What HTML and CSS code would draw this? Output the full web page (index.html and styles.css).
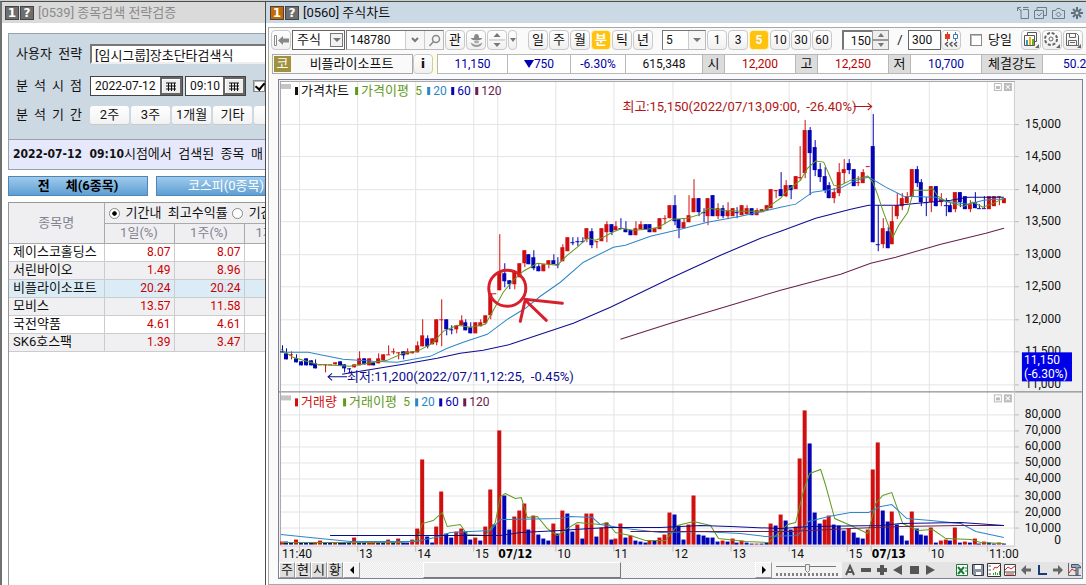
FILE: index.html
```html
<!DOCTYPE html>
<html lang="ko">
<head>
<meta charset="utf-8">
<title>[0560] 주식차트</title>
<link rel="stylesheet" href="styles.css">
</head>
<body>
<div class="desktop">
  <section class="window search">
    <header class="titlebar titlebar-off"><b class="tag">1</b><b class="tag">?</b><span>[0539] 종목검색 전략검증</span></header>
    <div class="search-body">
      <form class="panel">
        <div class="field"><label class="field-name" for="strategy">사용자&nbsp; 전략</label><input id="strategy" class="sunk strategy" value="[임시그룹]장초단타검색식"></div>
        <div class="field">
          <label class="field-name spaced" for="day"><span>분</span><span>석</span><span>시</span><span>점</span></label>
          <span class="picker"><input id="day" class="day" value="2022-07-12"><button type="button" aria-label="달력"><svg width="10" height="9" viewBox="0 0 10 9"><path d="M0 1H10M0 4H10M0 7H10M2.5 1V9M5.5 1V9M8.5 1V9" stroke="#111"/></svg></button></span>
          <span class="picker"><input class="time" aria-label="시간" value="09:10"><button type="button" aria-label="시각"><svg width="10" height="9" viewBox="0 0 10 9"><path d="M0 1H10M0 4H10M0 7H10M2.5 1V9M5.5 1V9M8.5 1V9" stroke="#111"/></svg></button></span>
          <input type="checkbox" class="check" aria-label="적용" checked>
        </div>
        <div class="field periods">
          <span class="field-name spaced"><span>분</span><span>석</span><span>기</span><span>간</span></span>
          <button type="button">2주</button><button type="button">3주</button><button type="button">1개월</button><button type="button">기타</button><button type="button" aria-label="더보기"></button>
        </div>
        <p class="summary"><b>2022-07-12&nbsp; 09:10</b>시점에서&nbsp; 검색된&nbsp; 종목&nbsp; 매</p>
      </form>
      <div class="tabs"><button class="tab on">전&nbsp;&nbsp;&nbsp;&nbsp; 체(6종목)</button><button class="tab">코스피(0종목)</button></div>
      <div class="grid">
        <table>
          <colgroup><col class="c-name"><col class="c-num"><col class="c-num"><col class="c-num"></colgroup>
          <thead>
            <tr><th rowspan="2">종목명</th><th colspan="3" class="modes"><label><input type="radio" name="mode" checked>기간내&nbsp; 최고수익률</label><label><input type="radio" name="mode">기간내</label></th></tr>
            <tr><th>1일(%)</th><th>1주(%)</th><th class="cut">1개월</th></tr>
          </thead>
          <tbody>
            <tr><td>제이스코홀딩스</td><td>8.07</td><td>8.07</td><td></td></tr>
            <tr class="alt"><td>서린바이오</td><td>1.49</td><td>8.96</td><td></td></tr>
            <tr class="sel"><td>비플라이소프트</td><td>20.24</td><td>20.24</td><td></td></tr>
            <tr class="alt"><td>모비스</td><td>13.57</td><td>11.58</td><td></td></tr>
            <tr><td>국전약품</td><td>4.61</td><td>4.61</td><td></td></tr>
            <tr class="alt"><td>SK6호스팩</td><td>1.39</td><td>3.47</td><td></td></tr>
          </tbody>
        </table>
      </div>
    </div>
  </section>

  <section class="window chart">
    <header class="titlebar"><b class="tag hot">1</b><b class="tag">?</b><span>[0560] 주식차트</span>
      <svg class="win-icons" width="68" height="14" viewBox="0 0 68 14" fill="none" stroke="#6d7c88"><path d="M1.500 5V1.500H5M2 2L5 5M5 3.500V12.500H12.500V3.500H7M7 1.500H12.500"/><path d="M18.500 4.500H27.500V12.500H18.500ZM21 4V1.500H30.500V9.500H28M21 8L23 10L26 6.500"/><path d="M36.500 4.500H39.500L41 2.500H44L46 4.500H48.500V12.500H36.500ZM42.500 6L45 8.500L42.500 11L40 8.500Z"/><g stroke="#5f6e7a" stroke-width="2"><path d="M61 1V13M55 7H67M57 3L65 11M65 3L57 11"/></g><circle cx="61" cy="7" r="1.500" fill="#cbd9e4" stroke="none"/></svg>
    </header>
    <div class="client">
      <div class="tools">
        <button class="tb" aria-label="이전"><svg width="15" height="11" viewBox="0 0 15 11"><path d="M.5 .5H2.500V10.500H.5Z" fill="#fff" stroke="#888"/><path d="M4 5.500L9 1V3.500H15V7.500H9V10Z" fill="#888"/></svg></button>
        <span class="kind"><select aria-label="종류"><option>주식</option></select><i></i></span>
        <span class="combo"><input class="code" aria-label="종목코드" value="148780"><button aria-label="목록"><svg width="8" height="6" viewBox="0 0 8 6"><path d="M1 1L4 4L7 1" fill="none" stroke="#777" stroke-width="2"/></svg></button><button aria-label="검색"><svg width="13" height="13" viewBox="0 0 13 13" fill="none" stroke="#888" stroke-width="1.500"><circle cx="8" cy="5" r="3.500"/><path d="M5.500 7.500L1.500 12"/></svg></button></span>
        <button class="tb">관</button>
        <button class="tb" aria-label="뉴스"><svg width="15" height="15" viewBox="0 0 15 15"><path d="M7.500 1Q10 1 10 5H13.500Q12 7.500 7.500 7.500T1.500 5H5Q5 1 7.500 1" fill="#888"/><path d="M5 8H10Q10 10.500 7.500 10.500T5 8" fill="#aaa"/><path d="M1.500 9.500Q3 14 7.500 14T13.500 9.500L10.500 11Q7.500 13 4.500 11Z" fill="#999"/></svg></button>
        <button class="tb" aria-label="위아래"><svg width="16" height="14" viewBox="0 0 16 14"><path d="M4.500 4L8 0L11.500 4ZM4.500 10L8 14L11.500 10Z" fill="#777"/><path d="M0 7H16" stroke="#bbb"/></svg></button><button class="tb slim" aria-label="더보기"><i class="down"></i></button>
        <div class="btns first"><button class="tb">일</button><button class="tb">주</button><button class="tb">월</button><button class="tb on">분</button><button class="tb">틱</button><button class="tb">년</button></div>
        <span class="combo minute"><input aria-label="분 단위" value="5"><button aria-label="목록"><i class="down"></i></button></span>
        <div class="btns nums"><button class="tb">1</button><button class="tb">3</button><button class="tb on">5</button><button class="tb">10</button><button class="tb">30</button><button class="tb">60</button></div>
        <span class="spin"><input aria-label="봉 수" value="150"><span><button aria-label="증가"><i class="up"></i></button><button aria-label="감소"><i class="down"></i></button></span></span>
        <span class="slash">/</span>
        <input class="total" aria-label="전체" value="300"><button class="tb more" aria-label="추가"><svg width="15" height="16" viewBox="0 0 15 16"><path d="M3.500 0V9" stroke="#e03c20"/><path d="M1 2H6V7H1Z" fill="#e03c20"/><path d="M11.500 0V9" stroke="#3c78b4"/><path d="M9.500 2.500H13.500V6.500H9.500Z" fill="#fff" stroke="#3c78b4"/><path d="M4 10L1.500 12L4 14.500M8.500 10L6 12L8.500 14.500M13 10L10.500 12L13 14.500" stroke="#555" fill="none" stroke-width="1.500"/></svg></button>
        <label class="today"><input type="checkbox" class="check">당일</label>
        <div class="btns">
          <button class="tb" aria-label="차트유형"><svg width="18" height="18" viewBox="0 0 18 18"><path d="M5.500 1.500H14.500V10.500H5.500Z" fill="#fff" stroke="#555"/><path d="M2.500 4.500H12.500V14.500H2.500Z" fill="#fff" stroke="#555"/><path d="M4 9H6V14H4Z" fill="#28a0c8"/><path d="M7 6H9V14H7Z" fill="#f0b400"/><path d="M10 8H12V14H10Z" fill="#6aaa30"/><path d="M17 13V17H13Z" fill="#666"/></svg></button>
          <button class="tb" aria-label="설정"><svg width="18" height="18" viewBox="0 0 18 18" fill="none" stroke="#666"><circle cx="8" cy="8" r="6" stroke-width="2" stroke-dasharray="3 1.700"/><circle cx="8" cy="8" r="2"/><path d="M17 13V17H13Z" fill="#666" stroke="none"/></svg></button>
          <button class="tb" aria-label="저장"><svg width="18" height="18" viewBox="0 0 18 18" fill="none" stroke="#666"><path d="M2.500 2.500H12.500L14.500 4.500V14.500H2.500ZM5.500 2.500V6.500H11.500V2.500M4.500 14V9.500H12.500V14M6 11.500H11"/><path d="M17 13V17H13Z" fill="#666" stroke="none"/></svg></button>
        </div>
      </div>
      <div class="quote">
        <div class="stock"><b>코</b><span>비플라이소프트</span></div><button class="tb info">i</button>
        <div class="values">
          <span class="v w71 blue">11,150</span><span class="v w63 blue"><i class="tri"></i>750</span><span class="v w55 blue">-6.30%</span><span class="v w77">615,348</span>
          <span class="v k">시</span><span class="v w71 red">12,200</span><span class="v k">고</span><span class="v w71 red">12,250</span><span class="v k">저</span><span class="v w71 blue">10,700</span><span class="v k wide">체결강도</span><span class="v w71 blue">50.24</span>
        </div>
      </div>
      <div class="frame">
        <svg id="plot" class="plot" viewBox="279 80 802 481" role="img" aria-label="비플라이소프트 5분 차트"></svg>
        <div class="bottom">
          <button class="key">주</button><button class="key">현</button><button class="key">시</button><button class="key">황</button><button class="key arrow" aria-label="왼쪽"><i class="left"></i></button>
          <div class="track"><div class="thumb"></div></div>
          <button class="key arrow" aria-label="오른쪽"><i class="right"></i></button>
          <div class="zoomer"><svg width="62" height="16" viewBox="0 0 62 16"><path d="M0 4.500H60" stroke="#777"/><path d="M.5 12.500H62" stroke="#111" stroke-width="3" stroke-dasharray="1 3"/><path d="M29.500 2.500H33.500V8.500L31.500 10.500L29.500 8.500Z" fill="#eee" stroke="#888"/></svg></div>
          <div class="marks">
            <button aria-label="글자"><svg width="14" height="14" viewBox="0 0 14 14"><path d="M3 12L7 3L11 12M4.500 9H9.500" stroke="#555" stroke-width="2" fill="none"/></svg></button>
            <button aria-label="축소"><svg width="14" height="14" viewBox="0 0 14 14"><path d="M2 5H12V9H2Z" fill="#555"/></svg></button>
            <button aria-label="확대"><svg width="14" height="14" viewBox="0 0 14 14"><path d="M5 2H9V5H12V9H9V12H5V9H2V5H5Z" fill="#555"/></svg></button>
            <button aria-label="뒤로"><svg width="14" height="14" viewBox="0 0 14 14"><path d="M11 2V12L2 7Z" fill="#555"/></svg></button>
            <button aria-label="정지"><svg width="14" height="14" viewBox="0 0 14 14"><path d="M3 3H12V11H3Z" fill="#555"/></svg></button>
            <button aria-label="재생"><svg width="14" height="14" viewBox="0 0 14 14"><path d="M3 2V12L12 7Z" fill="#555"/></svg></button>
          </div>
          <div class="files">
            <button aria-label="엑셀"><svg width="14" height="14" viewBox="0 0 14 14"><path d="M1.500 1.500H12.500V12.500H1.500Z" fill="#fff" stroke="#207838"/><path d="M3 4L9 11M9 4L3 11" stroke="#207838" stroke-width="2"/><path d="M10 5H12M10 8H12" stroke="#207838"/></svg></button>
            <button aria-label="파일 저장"><svg width="14" height="14" viewBox="0 0 14 14"><path d="M1.500 1.500H12.500V12.500H3L1.500 11Z" fill="#8894a0" stroke="#334"/><path d="M4 2H10V6H4ZM5 9H10V12H5Z" fill="#fff"/></svg></button>
            <button aria-label="지표"><svg width="16" height="16" viewBox="0 0 16 16"><path d="M1.500 1.500H14.500V14.500H1.500Z" fill="#fff" stroke="#333"/><path d="M2.500 4H5M2.500 8H5M2.500 12H5" stroke="#555"/><path d="M7 8L9 5L11 6L14 3" fill="none" stroke="#d22"/><path d="M7.500 13V11M9.500 13V10M11.500 13V11M13.500 13V9" stroke="#2a2"/></svg></button>
            <button aria-label="추세"><svg width="14" height="14" viewBox="0 0 14 14"><path d="M1.500 1.500H12.500V12.500H1.500ZM1.500 9H12.500" fill="#fff" stroke="#444"/><path d="M2 7L5 4L8 6L12 3M3 11H11" fill="none" stroke="#d22"/></svg></button>
            <button aria-label="왼쪽으로"><svg width="14" height="14" viewBox="0 0 14 14"><path d="M2 7L7 2V5.500H12V8.500H7V12Z" fill="#666"/></svg></button>
            <button aria-label="선"><svg width="14" height="14" viewBox="0 0 14 14"><path d="M4 2V11H12" fill="none" stroke="#1a3a78" stroke-width="2"/></svg></button>
            <button aria-label="오른쪽으로"><svg width="14" height="14" viewBox="0 0 14 14"><path d="M12 7L7 2V5.500H2V8.500H7V12Z" fill="#666"/></svg></button>
            <button aria-label="도구"><svg width="15" height="15" viewBox="0 0 15 15"><path d="M1.500 1V13.500H14" fill="none" stroke="#666"/><path d="M2 11L5 7L8 9L12 5" fill="none" stroke="#d22"/><path d="M4.500 2.500H11L13.500 4.500V6L11 5.500V13H9V5.500H4.500Z" fill="#9ab" stroke="#456"/></svg></button>
          </div>
        </div>
      </div>
    </div>
  </section>
</div>
<script src="chart.js"></script>
</body>
</html>
```
FILE: styles.css
```css
* { box-sizing: border-box; }
html, body { height: 100%; }
body { margin: 0; overflow: hidden; background: #c9cfcb; }
body, button, input, select { font: 13px/16px Roboto, "Noto Sans CJK KR", sans-serif; color: #111; }
button, input, select { padding: 0; margin: 0; border: 0; border-radius: 0; background: none; }
input { min-width: 0; outline: 0; }
button { display: flex; align-items: center; justify-content: center; white-space: nowrap; }
svg { display: block; }
i { display: inline-block; }

.desktop { display: flex; height: 100%; padding-top: 1px; }
.window { overflow: hidden; background: #fff; border-top: 1px solid #4c4c4c; }
.search { flex: 0 0 265px; border-left: 2px solid #6e716f; }
.chart { flex: 1; min-width: 0; border-left: 1px solid #4c4c4c; display: flex; flex-direction: column; }
.titlebar { display: flex; align-items: center; height: 21px; padding-left: 4px; background: #cbd9e4; white-space: nowrap; }
.titlebar-off { background: #dadada; color: #8a8a8a; padding-left: 3px; }
.titlebar span { margin-left: 3px; }
.tag { width: 14px; height: 14px; margin-right: 1px; background: #6e6e6e; border: 1px solid #444; color: #fff; font: bold 12px/12px "DejaVu Sans", sans-serif; text-align: center; }
.tag.hot { background: #c46a00; }
.win-icons { margin-left: auto; margin-right: 2px; }

.search-body { padding: 10px 0 0 6px; width: 340px; height: calc(100% - 21px); display: flex; flex-direction: column; }
.panel { background: #ccd8e2; border: 1px solid #98a2ac; padding-top: 10px; }
.field { display: flex; align-items: center; height: 20px; margin-bottom: 12px; padding-left: 7px; }
.field-name { width: 66px; margin-right: 8px; white-space: nowrap; }
.spaced { display: flex; justify-content: space-between; }
.sunk { background: #fff; border: 2px solid #777; border-right: 0; border-bottom-color: #eee; }
.strategy { width: 200px; height: 20px; padding-left: 3px; }
.picker { display: flex; height: 20px; background: #fff; border: 1px solid #444; margin-right: 2px; }
.picker input { font-size: 12px; padding-left: 4px; }
.day { width: 69px; }
.time { width: 37px; }
.picker button { width: 22px; background: #eee; border: 2px solid #666; box-shadow: inset 1px 1px #fff; }
.check { appearance: none; width: 12px; height: 12px; background: #fff; border: 1px solid #888; box-shadow: inset 1px 1px #bbb; }
.check:checked::before { content: ""; display: block; width: 4px; height: 7px; margin: 0 0 0 3px; border: solid #000; border-width: 0 2px 2px 0; rotate: 40deg; }
.picker + .check { margin-left: 5px; }
.periods { margin-bottom: 14px; margin-top: -3px; }
.periods button { width: 39px; height: 19px; margin-right: 2px; background: linear-gradient(#fff, #f2f2f2); border-radius: 3px; border-bottom: 1px solid #c8c8c8; }
.summary { margin: 0; padding: 5px 4px 0; height: 30px; background: #e6e8fb; border-top: 1px solid #98a2ac; white-space: nowrap; line-height: 18px; }
.summary b { font: bold 12px/18px "DejaVu Sans Condensed", "DejaVu Sans", sans-serif; }
.tabs { display: flex; gap: 8px; margin: 6px 0; }
.tab { width: 140px; height: 20px; background: linear-gradient(#9fcaec, #5e9fd4); border: 1px solid #4f86b8; color: #fff; }
.tab.on { color: #000; font-weight: bold; }
.grid { flex: 1; border: 1px solid #999; border-bottom: 0; background: #fff; }
table { border-collapse: collapse; table-layout: fixed; width: 305px; line-height: 16px; }
.c-name { width: 95px; }
.c-num { width: 70px; }
th { height: 20px; padding: 0; background: #efeff2; border: 1px solid #aaa; border-top: 0; border-left: 0; font-weight: normal; color: #83838f; }
th.modes { color: #111; text-align: left; white-space: nowrap; overflow: hidden; }
th.cut { text-align: left; padding-left: 11px; }
.modes label { display: inline-flex; align-items: center; vertical-align: middle; }
.modes input { appearance: none; width: 11px; height: 11px; margin: 0 6px 0 4px; border: 1px solid #888; border-radius: 50%; background: #fff; }
.modes input:checked { background: radial-gradient(#000 0 30%, #fff 40%); }
td { height: 18px; padding: 0 3px 0 4px; border: 1px solid #ccc; border-left: 0; text-align: right; color: #c00; white-space: nowrap; font-size: 12px; }
td:first-child { text-align: left; color: #111; padding-right: 0; font-size: 13px; }
.alt td { background: #f0f0f2; }
.sel td { background: #dcecf7; }

.client { flex: 1; display: flex; flex-direction: column; margin: 4px 0 0 2px; border: 1px solid #a8a8a8; border-right: 0; min-height: 0; background: #fafafa; }
.tools { display: flex; align-items: center; height: 26px; padding: 0 0 2px 2px; white-space: nowrap; overflow: hidden; flex: none; }
.tools > * { flex: none; margin-right: 1px; }
.tb { width: 20px; height: 20px; border: 1px solid #c9c9c9; border-radius: 4px; background: linear-gradient(#fff, #f0f0f0); }
.btns .tb { flex: none; margin-right: 1px; }
.nums .tb { font-size: 12px; }
.btns { display: flex; }
.btns.first { margin-left: 10px; margin-right: 8px; }
.tb.on { background: #ffc20e; border-color: #fff0b0; color: #fff; font-weight: bold; }
.kind { position: relative; }
.kind select { appearance: none; width: 53px; height: 20px; padding-left: 4px; border: 1px solid #666; background: #fff; }
.kind i { position: absolute; right: 2px; top: 3px; width: 13px; height: 14px; border: 1px solid #777; background: #f2f2f2; pointer-events: none; }
.kind i::after { content: ""; display: block; margin: 4px 2px; border: 4px solid transparent; border-top-color: #777; border-bottom: 0; }
.combo { display: flex; height: 20px; border: 1px solid #bbb; border-top-color: #777; border-left-color: #777; background: #fff; }
.combo input { font-size: 12px; padding-left: 3px; }
.combo .code { width: 58px; }
.combo button { width: 19px; border-left: 1px solid #ccc; background: #f6f6f6; }
.minute input { width: 25px; }
.minute button { width: 17px; }
.slim { width: 9px; }
.down, .up, .left, .right, .tri { width: 0; height: 0; border: 4px solid transparent; }
.down { border-top-color: #777; border-bottom: 0; }
.up { border-bottom-color: #777; border-top: 0; }
.left { border-width: 4px 4px 4px 0; border-right-color: #000; }
.right { border-width: 4px 0 4px 4px; border-left-color: #000; }
.slim .down, .spin i { border-left-width: 3px; border-right-width: 3px; }
.spin { display: flex; margin-left: 8px; }
.spin input { width: 30px; height: 20px; border: 2px solid #777; border-right: 0; border-bottom: 1px solid #ccc; background: #fff; text-align: right; font-size: 12px; padding-right: 1px; }
.spin button { width: 17px; height: 10px; border: 1px solid #999; background: #eee; }
.slash { width: 12px; margin-left: 4px; text-align: center; }
.total { width: 33px; height: 20px; border: 1px solid #666; background: #fff; font-size: 12px; padding-left: 3px; }
.tools > .total { margin: 0 0 0 1px; }
.today { display: flex; align-items: center; gap: 6px; margin: 0 9px 0 8px; }
.quote { display: flex; height: 20px; padding-left: 3px; background: #fdfbe2; flex: none; overflow: hidden; }
.stock { display: flex; align-items: center; flex: none; width: 141px; background: #fafafa; border: 1px solid #aaa; }
.stock b { width: 17px; height: 16px; margin-left: 1px; background: #a0923c; color: #fff; font-weight: normal; text-align: center; }
.stock span { flex: 1; text-align: center; }
.info { margin-right: 4px; flex: none; font: bold 13px/16px "DejaVu Sans", sans-serif; }
.values { display: flex; }
.v { flex: none; display: flex; align-items: center; justify-content: center; background: #fff; border: 1px solid #b8b8b8; border-left: 0; font-size: 12px; }
.v:first-child { border-left: 1px solid #b8b8b8; }
.k { width: 22px; background: #dcdcdc; font-size: 13px; }
.wide { width: 61px; }
.w71 { width: 71px; } .w63 { width: 63px; } .w55 { width: 55px; } .w77 { width: 77px; }
.blue { color: #0000a8; } .red { color: #b80000; }
.tri { border: 5px solid transparent; border-top: 8px solid #0000b8; border-bottom: 0; }

.frame { flex: 1; min-height: 0; margin: 5px 3px 5px 9px; border: 1px solid #7c8098; background: #efefef; display: flex; flex-direction: column; }
.plot { width: 100%; height: auto; flex: none; }
.plot text { font: 12px Roboto, "Noto Sans CJK KR", sans-serif; }
.plot .ko { font-size: 13px; }
.plot .date { font: bold 12px "DejaVu Sans Condensed", sans-serif; }
.bottom { display: flex; height: 18px; background: #e4e4e4; align-items: center; overflow: hidden; }
.bottom > * { flex: none; }
.key { width: 16px; height: 16px; background: #dedede; border: 1px solid #999; border-top-color: #fff; border-left-color: #fff; }
.arrow { width: 17px; background: #f4f4f4; }
.bottom .track { flex: 1; height: 16px; background: repeating-conic-gradient(#e9e9e9 0 25%, #fafafa 0 50%) 0 0 / 2px 2px; }
.thumb { width: 50%; height: 16px; margin-left: 16%; background: #ececec; border: 1px solid #777; border-top-color: #fff; border-left-color: #fff; }
.zoomer { padding: 0 4px; background: #f4f4f4; height: 16px; }
.marks, .files { display: flex; }
.marks button, .files button { width: 16px; height: 16px; }
.marks { margin-right: 16px; }
```
FILE: chart.js
```js
// Candle rows: colour, body top, body bottom, wick top, wick bottom (plot units).
const candles = `b 351 352 345 352|b 353 359 348 359|r 354 354 351 359|b 358 362 354 362|b 361 365 361 365|b 358 365 358 365|b 360 365 360 365|b 363 368 359 368|r 364 364 364 364|r 364 364 364 372|r 364 364 364 364|r 362 364 362 364|b 361 365 361 365|b 364 368 364 372|b 368 368 368 372|r 364 367 364 367|r 358 365 351 365|b 358 364 358 364|r 358 365 358 365|b 362 365 362 365|r 358 363 353 363|r 354 360 354 360|r 354 354 345 354|r 351 351 348 354|r 352 352 352 359|b 351 355 351 359|r 351 354 348 354|r 351 353 351 353|r 345 352 341 352|r 335 346 319 346|b 338 346 335 348|r 338 344 338 344|r 319 342 319 345|r 319 319 299 346|b 319 329 319 335|b 329 329 325 334|r 325 329 325 333|r 320 325 315 325|b 322 330 319 330|b 327 333 322 333|r 322 333 322 333|r 322 326 319 326|r 315 323 315 323|r 293 315 293 319|r 293 293 293 293|r 272 290 234 290|b 273 281 263 287|b 280 284 280 289|r 271 284 271 289|r 263 277 263 277|r 250 263 250 267|b 254 264 254 264|b 257 268 250 270|b 266 271 264 271|r 264 271 264 271|r 260 264 260 268|b 260 264 254 264|b 264 264 257 268|r 247 261 244 261|r 237 251 237 251|b 242 242 237 245|b 241 241 237 246|b 241 241 237 241|r 228 239 228 242|b 231 245 228 248|r 241 241 241 248|r 228 241 228 241|r 224 232 221 242|b 224 232 224 235|r 226 230 221 230|b 228 228 218 228|b 229 232 221 232|b 230 235 230 235|r 228 235 221 235|r 224 229 221 229|b 224 229 224 229|b 224 232 224 232|r 228 232 228 232|r 218 229 218 229|r 218 218 215 224|r 205 218 205 218|b 205 221 195 225|b 219 228 219 238|r 222 228 218 228|r 215 222 195 222|r 198 212 179 212|b 198 212 198 216|b 212 212 208 222|r 198 216 198 225|b 195 216 195 216|r 208 216 203 219|b 208 216 205 218|r 211 216 202 219|r 208 216 208 216|b 212 212 207 218|r 205 215 205 215|r 208 214 205 214|b 208 215 208 215|r 210 215 208 215|r 209 212 209 212|r 205 210 205 210|r 189 208 189 208|r 190 190 190 198|b 189 196 172 196|r 185 196 180 197|b 185 190 185 199|r 176 189 176 189|r 177 177 146 180|r 130 173 120 178|b 130 153 127 195|b 147 170 140 176|b 169 177 163 182|b 176 190 167 193|b 185 198 182 198|r 192 198 188 203|r 172 193 163 196|r 169 173 159 183|b 163 170 159 174|b 169 186 169 186|r 182 182 176 186|r 172 183 169 183|r 166 166 166 166|b 146 242 114 242|b 244 244 205 251|r 228 244 218 248|b 231 248 227 248|r 221 244 206 244|r 205 216 193 219|r 198 206 193 210|r 196 203 192 203|r 169 196 169 196|b 169 183 166 187|b 182 202 179 206|b 202 202 197 216|r 186 202 186 212|b 186 206 186 206|r 199 202 193 206|b 205 205 198 216|b 205 212 203 212|r 192 209 192 212|b 192 202 192 207|b 196 209 196 209|r 204 209 200 212|b 202 208 192 208|b 208 208 204 208|b 208 208 196 208|r 196 209 196 209|r 196 206 196 206|r 196 196 196 205|r 198 203 198 203`.split('|').map(s => s.split(' '));
// Volume bars: colour letter followed by the bar's top.
const volumes = 'r541 b541 b542 r539 b542 b542 b542 r542 r540 b542 b542 r542 b542 b542 b542 r537 b541 b541 r542 r541 b542 b542 r539 b542 r538 b542 b542 r539 r528 r459 b536 b542 r526 r491 b533 b537 r531 r528 b531 b539 r537 b540 r526 r489 b524 r430 b495 b529 r516 r510 r503 b529 r515 b534 b538 b540 r523 b533 r510 b513 b531 r524 b538 r513 r513 b536 r527 r522 b539 r538 r523 b537 r535 b540 b541 b542 r540 b540 r537 r534 r512 b514 b525 b539 r524 r495 b534 b535 b537 b537 b541 r540 b541 r538 b542 r540 b542 b543 r543 b543 b542 r523 b525 r514 b520 b529 r526 r458 r410 b443 b512 b523 r519 r515 b524 b525 b530 r528 b532 b537 b538 r529 r469 r442 b510 b521 r511 b524 b535 b540 r511 b528 b534 b535 r527 b542 r540 r539 b540 r527 b542 r541 b542 r538 b543 r541 b542 b543 r542 b543'.split(' ');
const green = '#5f9a1c', sky = '#2c86c8', navy = '#0c0c90', plum = '#68204c', red = '#d01010', blue = '#0404b4', grid = '#e4e4e4';
const lines = [
  [sky, '281,352 308,352 343,359 373,361 397,362 413,359 430,356 447,348 463,342 487,334 507,319 525,308 540,296 560,282 583,262 613,247 625,245 650,236 680,229 707,222 740,216 763,211 780,207 795,204 812,192 840,188 853,181 868,177 885,187 903,196 935,197 945,201 967,204 983,200 993,199 1003,199'],
  [navy, '342,374 360,371 403,364 437,358 460,353 483,350 510,344 537,335 573,323 610,307 670,278 720,255 760,238 780,231 815,218 850,209 868,205 897,205 917,203 950,200 967,197 1003,197'],
  [plum, '620,339 670,323 740,302 780,290 840,274 870,263 895,257 940,244 985,233 1003,228'],
  [green, '281,349 293,357 317,364 350,366 373,362 387,360 403,353 417,351 432,343 443,331 457,325 470,327 485,324 492,312 503,292 512,281 523,271 537,263 557,265 567,255 577,247 587,238 595,240 603,237 612,232 622,228 633,230 647,229 658,227 672,219 687,218 700,214 708,208 723,210 740,211 763,211 773,203 780,198 787,190 800,180 807,168 815,161 823,162 833,185 838,186 850,180 867,176 872,182 877,195 883,213 892,237 898,225 907,212 913,190 927,190 932,188 937,196 947,202 963,206 972,202 982,207 993,203 1003,198'],
  [green, '281,542 400,542 417,540 422,523 433,520 442,512 447,526 460,524 467,534 485,535 495,522 500,496 505,493 515,498 521,497 527,517 537,516 547,528 557,535 565,529 577,522 600,524 607,522 615,532 630,535 645,540 665,540 677,525 693,521 710,525 718,538 745,541 768,542 775,535 787,524 795,522 803,490 809,473 820,469 825,485 834,518 850,525 867,533 875,503 882,495 891,492 902,523 917,530 932,529 945,538 970,539 980,542 1003,543'],
  [sky, '281,534 310,537 350,541 415,541 440,536 450,532 490,530 500,519 560,518 570,516 592,517 600,524 625,528 660,532 700,531 740,533 765,536 797,535 808,521 828,516 850,512 868,512 880,506 891,504 906,518 930,520 960,523 975,531 1003,537'],
  [plum, '630,531 790,531 850,528 900,526 960,525 1003,525'],
  [navy, '330,535 500,535 520,532 560,530 590,528 610,527 660,527 700,525 730,526 780,528 810,526 880,525 900,523 960,522 1003,525']
];

const out = [];
const rect = (x, y, w, h, fill, extra = '') => out.push(`<rect x="${x}" y="${y}" width="${w}" height="${h}" fill="${fill}" ${extra}/>`);
const text = (x, y, s, fill = '#111', cls = '', extra = '') => out.push(`<text x="${x}" y="${y}" fill="${fill}" class="${cls}" ${extra}>${s}</text>`);

rect(279, 80, 802, 481, '#efefef');
rect(281, 82, 733, 463, '#fff');
[299, 357, 415, 473, 497, 555, 613, 672, 730, 788, 846, 870, 928, 986].forEach(x => { rect(x, 82, 1, 463, grid); rect(x, 545, 1, 6, '#bbb'); });
[124, 156, 189, 221, 254, 286, 319, 351, 384].forEach((y, i) => {
  rect(281, y, 733, 1, grid); rect(1014, y, 4, 1, '#bbb');
  text(1024, y + 4, (15 - i / 2).toFixed(1).replace('.', ',').replace(/,(.)$/, ',$100'));
});
[414, 430, 446, 462, 478, 495, 511, 527].forEach((y, i) => {
  rect(281, y, 733, 1, grid); rect(1014, y, 4, 1, '#bbb');
  text(1060, y + 4, (8 - i) + '0,000', '#111', '', 'text-anchor="end"');
});
text(1060, 543, '0', '#111', '', 'text-anchor="end"');
rect(279, 391, 802, 1, '#777');
rect(281, 81, 733, 1, '#aaa'); rect(280, 81, 1, 464, '#aaa'); rect(1013, 82, 1, 463, '#ccc');
rect(281, 545, 733, 1, '#ccc');

const x0 = i => Math.round(281.5 + 4.84 * i);
candles.forEach(([c, top, bottom, high, low], i) => {
  const fill = c === 'r' ? red : blue, x = x0(i);
  rect(x, high, 1, low - high, fill);
  rect(x - 2, top, 4, Math.max(1, bottom - top), fill);
});
volumes.forEach((v, i) => rect(x0(i) - 2, +v.slice(1), 4, 544 - v.slice(1), v[0] === 'r' ? red : blue));
lines.forEach(([c, p]) => out.push(`<polyline points="${p}" fill="none" stroke="${c}"/>`));

[[98, 84, '가격차트', '가격이평', '#111', 299], [409, 395, '거래량', '거래이평', red, 299]].forEach(([y, top, a, b, c, x]) => {
  const second = a.length === 4 ? 354 : 342;
  rect(281, top, 10, 5, '#c4c4c4');
  rect(x - 4, y - 11, 3, 8, c); text(x + 2, y - 3, a, c, 'ko');
  rect(second + 1, y - 11, 3, 8, green); text(second + 7, y - 3, b, green, 'ko');
  const n = second + 60;
  text(n + 1, y - 3, '5', green);
  rect(n + 13, y - 11, 3, 8, sky); text(n + 19, y - 3, '20', sky);
  rect(n + 37, y - 11, 3, 8, blue); text(n + 43, y - 3, '60', blue);
  rect(n + 61, y - 11, 3, 8, plum); text(n + 67, y - 3, '120', plum);
  rect(993.5, top - 0.5, 7, 7, '#fff', 'stroke="#bbb"'); rect(995, top + 2, 4, 3, '#bbb');
  rect(1003, top - 1, 8, 8, '#bbb');
  out.push(`<path d="M1005 ${top + 1}L1009 ${top + 5}M1009 ${top + 1}L1005 ${top + 5}" stroke="#fff"/>`);
});

text(622, 111, '최고:15,150(2022/07/13,09:00,&#160; -26.40%)', '#b01414', 'ko');
out.push('<path d="M853 106.500H871M867 103L871 106.500L867 110" fill="none" stroke="#b01414"/>');
text(347, 381, '최저:11,200(2022/07/11,12:25,&#160; -0.45%)', '#0c0c90', 'ko');
out.push('<path d="M347 376.500H328M332 373L328 376.500L332 380" fill="none" stroke="#0c0c90"/>');

[['11:40', 282], ['13', 359], ['14', 417], ['15', 475], ['10', 557], ['11', 614], ['12', 674], ['13', 732], ['14', 790], ['15', 848], ['10', 930], ['11:00', 988]].forEach(([s, x]) => text(x, 557, s));
text(498, 557, '07/12', '#000', 'date');
text(871, 557, '07/13', '#000', 'date');
rect(1021, 352, 50, 29, '#0000e8');
text(1023, 364, '11,150', '#fff'); text(1023, 378, '(-6.30%)', '#fff');

out.push('<g fill="none" stroke="#d8202c" stroke-width="3" stroke-linecap="round"><ellipse cx="507" cy="288" rx="18.500" ry="18"/><path d="M520 321L525 299L562 303M525 300L546 320"/></g>');
document.getElementById('plot').innerHTML = out.join('');
```
